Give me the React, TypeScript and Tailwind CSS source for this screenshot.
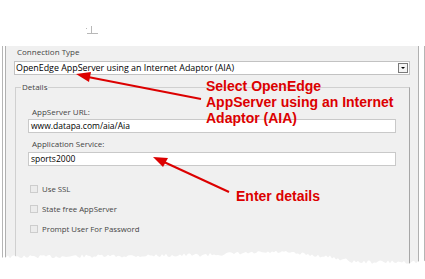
import React from "react";

const RED = "#dc0000";

function rand(seed: number) {
  let s = seed;
  return () => {
    s = (s * 9301 + 49297) % 233280;
    return s / 233280;
  };
}

// piecewise baseline for the torn edges
function lerp(stops: [number, number][], x: number) {
  for (let i = 0; i < stops.length - 1; i++) {
    const [x0, y0] = stops[i];
    const [x1, y1] = stops[i + 1];
    if (x >= x0 && x <= x1) return y0 + ((x - x0) / (x1 - x0)) * (y1 - y0);
  }
  return stops[stops.length - 1][1];
}

function tornEdge(stops: [number, number][], amp: number, seed: number) {
  const r = rand(seed);
  const pts: string[] = [];
  for (let x = 0; x <= 426; x += 2) {
    pts.push(`${x},${(lerp(stops, x) + (r() - 0.5) * amp).toFixed(1)}`);
  }
  return pts.join(" ");
}

const topEdge = tornEdge(
  [
    [0, 42],
    [60, 41],
    [95, 37],
    [130, 41],
    [250, 43],
    [425, 43],
  ],
  3,
  7
);

const bottomEdge = tornEdge(
  [
    [0, 257],
    [120, 256],
    [200, 255],
    [280, 252],
    [330, 257],
    [355, 262],
    [425, 262],
  ],
  3.5,
  13
);

function Checkbox({ label }: { label: string }) {
  return (
    <div className="flex items-center h-[12px] pl-[2px]">
      <span className="w-[8px] h-[8px] border border-[#cdcdcd] bg-[#ececec]" />
      <span className="ml-[4px] text-[7.8px] leading-[12px] text-[#454545]">{label}</span>
    </div>
  );
}

export default function App() {
  return (
    <div
      className="relative w-[425px] h-[279px] bg-white overflow-hidden pt-[38px]"
      style={{ fontFamily: '"Open Sans", "Noto Sans", sans-serif' }}
    >
      {/* window frame */}
      <div className="ml-[2px] w-[423px] h-[226px] border-x border-[#b5b5b5]">
        <div className="ml-[2px] mr-[5px] h-full border-x border-[#b0b0b0] bg-[#f0f0f0] pl-[8px]">
          <div className="mt-[8px] h-[12px] pl-[3px] text-[8px] leading-[12px] text-[#444]">Connection Type</div>

          {/* dropdown */}
          <div className="mt-[3px] w-[396px] h-[14px] border border-[#c2c2c2] bg-white flex items-center justify-between pl-[1px] pr-[1px]">
            <span className="text-[8.9px] leading-[12px] text-black whitespace-nowrap">
              OpenEdge AppServer using an Internet Adaptor (AIA)
            </span>
            <span className="w-[10px] h-[10px] border border-[#7a7a7a] bg-[#f4f4f4] flex items-center justify-center">
              <span className="w-0 h-0 border-x-[2px] border-x-transparent border-t-[2px] border-t-black" />
            </span>
          </div>

          {/* details group */}
          <div className="relative mt-[12px] ml-[1px] w-[395px] h-[190px] border border-[#d0d0d0] border-r-[#a6a6a6] pl-[12px]">
            <span className="absolute left-[5px] top-[-7px] px-[1px] bg-[#f0f0f0] text-[8px] leading-[12px] text-[#444]">
              Details
            </span>

            <div className="mt-[18px] h-[12px] pl-[4px] text-[8px] leading-[12px] text-[#444]">AppServer URL:</div>
            <div className="mt-[1px] w-[368px] h-[14px] border border-[#c9c9c9] bg-white pl-[2px] text-[8.5px] leading-[12px] text-black">
              www.datapa.com/aia/Aia
            </div>

            <div className="mt-[5px] h-[12px] pl-[4px] text-[8px] leading-[12px] text-[#444]">Application Service:</div>
            <div className="mt-[2px] w-[368px] h-[14px] border border-[#c9c9c9] bg-white pl-[2px] text-[8.5px] leading-[12px] text-black">
              sports2000
            </div>

            <div className="mt-[17px] flex flex-col gap-[8px]">
              <Checkbox label="Use SSL" />
              <Checkbox label="State free AppServer" />
              <Checkbox label="Prompt User For Password" />
            </div>
          </div>
        </div>
      </div>

      {/* torn edges, stray mark and arrows drawn over the capture */}
      <svg className="absolute left-0 top-0" width="425" height="279" viewBox="0 0 425 279">
        <polygon points={`0,0 ${topEdge} 426,0`} fill="#ffffff" />
        <polygon points={`0,279 ${bottomEdge} 426,279`} fill="#ffffff" />
        <g stroke="#b8b8b8" strokeWidth="1" fill="none">
          <line x1="91.5" y1="26" x2="91.5" y2="33" />
          <line x1="87" y1="33.5" x2="98" y2="33.5" />
          <line x1="86.5" y1="28" x2="86.5" y2="29" />
        </g>
        <g stroke={RED} strokeWidth="2" fill={RED}>
          <line x1="201" y1="99" x2="88" y2="77" />
          <polygon points="76,74 91,72 89,82" stroke="none" />
          <line x1="229" y1="192" x2="164" y2="162" />
          <polygon points="153,157 168,158 163,167" stroke="none" />
        </g>
      </svg>

      <div
        className="absolute left-[206px] top-[78px] text-[14px] leading-[16px] font-bold whitespace-nowrap"
        style={{ fontFamily: '"Liberation Sans", Arial, sans-serif', color: RED }}
      >
        Select OpenEdge
        <br />
        AppServer using an Internet
        <br />
        Adaptor (AIA)
      </div>
      <div
        className="absolute left-[236px] top-[188px] text-[14px] leading-[16px] font-bold whitespace-nowrap"
        style={{ fontFamily: '"Liberation Sans", Arial, sans-serif', color: RED }}
      >
        Enter details
      </div>
    </div>
  );
}
